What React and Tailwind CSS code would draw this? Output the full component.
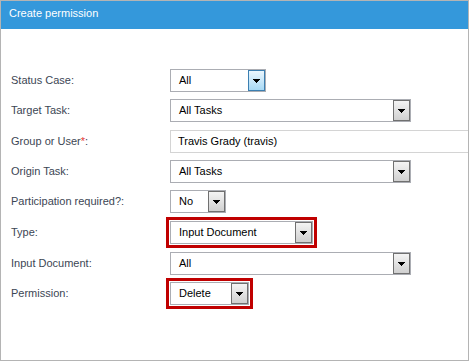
import React from "react";

function Arrow() {
  return (
    <svg width="7" height="4" viewBox="0 0 7 4" shapeRendering="crispEdges">
      <rect x="0" y="0" width="7" height="1" fill="#000" />
      <rect x="1" y="1" width="5" height="1" fill="#000" />
      <rect x="2" y="2" width="3" height="1" fill="#000" />
      <rect x="3" y="3" width="1" height="1" fill="#000" />
    </svg>
  );
}

function Select({ value, width, hover = false, highlight = false }) {
  return (
    <div
      className={
        "flex h-[23px] border border-[#abadb3] bg-white " +
        (highlight ? "outline-[3px] outline-solid outline-[#c00000] outline-offset-[1px]" : "")
      }
      style={{ width }}
    >
      <div className="flex flex-1 items-center pl-[8px] text-[11px] text-black">{value}</div>
      <div
        className={
          "flex w-[17px] items-center justify-center border " +
          (hover
            ? "border-[#3c7fb1] bg-gradient-to-b from-[#eaf6fd] to-[#a7d9f5]"
            : "border-[#707070] bg-gradient-to-b from-[#f4f4f4] to-[#d0d0d0]")
        }
      >
        <Arrow />
      </div>
    </div>
  );
}

function Row({ label, children, mt, required = false }) {
  return (
    <div className="flex h-[23px] items-center" style={{ marginTop: mt }}>
      <div className="w-[159px] shrink-0 text-[11px] text-[#3c4654]">
        {label}
        {required && <span className="text-[#e53935]">*</span>}
        {required && ":"}
      </div>
      {children}
    </div>
  );
}

export default function App() {
  return (
    <div
      className="flex h-[361px] w-[469px] flex-col overflow-hidden border border-[#b4b4b4] bg-white"
      style={{ fontFamily: '"Liberation Sans", Arial, sans-serif' }}
    >
      <div className="h-[28px] shrink-0 bg-[#3498db] pl-[8px] pt-[4px] text-[11px] text-white">
        Create permission
      </div>
      <div className="flex flex-col pl-[10px] pt-[40px]">
        <Row label="Status Case:" mt={0}>
          <Select value="All" width={96} hover />
        </Row>
        <Row label="Target Task:" mt={7}>
          <Select value="All Tasks" width={241} />
        </Row>
        <Row label="Group or User" mt={8} required>
          <div className="flex h-[23px] w-[320px] shrink-0 items-center border border-[#d4d4d4] pl-[7px] text-[11px] text-black">
            Travis Grady (travis)
          </div>
        </Row>
        <Row label="Origin Task:" mt={7}>
          <Select value="All Tasks" width={241} />
        </Row>
        <Row label="Participation required?:" mt={7}>
          <Select value="No" width={56} />
        </Row>
        <Row label="Type:" mt={8}>
          <Select value="Input Document" width={143} highlight />
        </Row>
        <Row label="Input Document:" mt={8}>
          <Select value="All" width={241} />
        </Row>
        <Row label="Permission:" mt={7}>
          <Select value="Delete" width={79} highlight />
        </Row>
      </div>
    </div>
  );
}
